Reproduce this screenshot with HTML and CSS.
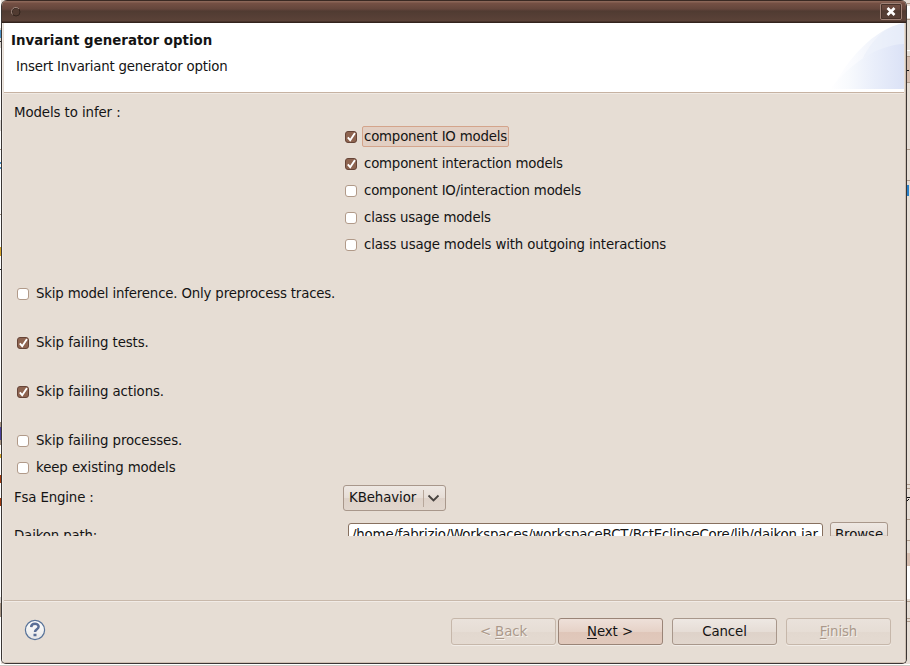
FILE: index.html
```
<!DOCTYPE html>
<html lang="en">
<head>
<meta charset="utf-8">
<title>Invariant generator option</title>
<link rel="stylesheet" href="styles.css">
</head>
<body>
<svg class="behind" width="910" height="666" shape-rendering="crispEdges">
  <rect width="910" height="666" fill="#e6ddd5"/>
  <rect width="1" height="666" fill="#fff"/>
  <path fill="#dcd7d3" d="M0 28h1v20H0zM0 120h1v11H0zM0 597h1v14H0z"/>
  <path fill="#4b91c5" d="M0 30h1v8H0zM0 162h1v2H0zM0 167h1v2H0z"/>
  <path fill="#222" d="M0 41h1v1H0zM0 269h1v1H0z"/>
  <path fill="#a69484" d="M0 149h1v1H0zM0 214h1v1H0zM0 422h1v23H0zM0 603h1v14H0z"/>
  <path fill="#d5a326" d="M0 247h1v9H0zM0 454h1v4H0z"/>
  <path fill="#4b419b" d="M0 427h1v13H0z"/>
  <path fill="#a13a0e" d="M0 475h1v8H0zM0 498h1v8H0z"/>
  <path fill="#fff" d="M907 6h3v12h-3zM907 50h3v1h-3zM907 566h3v33h-3z"/>
  <path fill="#d7beb0" d="M907 57h3v25h-3zM907 553h3v13h-3z"/>
  <path fill="#b09b8b" d="M907 3h3v1h-3zM907 19h3v1h-3zM907 56h3v1h-3zM907 82h3v1h-3zM907 149h3v1h-3zM907 180h3v1h-3zM907 484h3v1h-3zM907 488h3v1h-3zM907 519h3v1h-3zM907 540h3v1h-3zM907 601h3v1h-3zM907 618h3v1h-3zM907 621h3v1h-3z"/>
  <path fill="#111" d="M907 70h2v1h-2zM907 497h3v1h-3zM907 500h1v1h-1zM908 499h1v1h-1z"/>
  <path fill="#2880c8" d="M907 185h2v11h-2z"/>
  <path fill="#fff" d="M0 664h910v1H0z"/>
  <path fill="#cfc8c2" d="M0 665h910v1H0z"/>
</svg>
<main class="window">
  <div class="titlebar">
    <svg width="12" height="12"><circle cx="6" cy="6" r="4" fill="#513b31" stroke="#33251e"/><path d="M2.500 8.500A4.200 4.200 0 1 1 9 3" fill="none" stroke="#a38b80"/></svg>
    <span class="close"><svg width="10" height="9"><path d="M1.500 1l7 7M8.500 1l-7 7" stroke="#fff" stroke-width="2.600"/></svg></span>
  </div>
  <div class="content">
    <header class="header">
      <div class="titles"><h1>Invariant generator option</h1><p>Insert Invariant generator option</p></div>
      <svg class="swoosh" width="74" height="66">
        <defs><linearGradient id="a"><stop offset="0" stop-color="#fff"/><stop offset=".3" stop-color="#fafbfe"/><stop offset="1" stop-color="#e4eaf8"/></linearGradient><linearGradient id="b"><stop offset="0" stop-color="#fff"/><stop offset=".25" stop-color="#f8fafd"/><stop offset=".6" stop-color="#e9eefa"/><stop offset="1" stop-color="#dbe2f6"/></linearGradient></defs>
        <path d="M2 66C17 37 43 6 74 0V66z" fill="url(#a)"/><path d="M33 35C44 14 57 4 74 0V21C58 23 45 29 33 35z" fill="#e8eef9" opacity=".5"/>
        <path d="M0 66C22 39 48 22 74 21V66z" fill="url(#b)"/>
      </svg>
    </header>
    <section class="form">
      <div class="label models">Models to infer :</div>
      <div class="options">
        <label><i class="box on"></i><span class="focus">component IO models</span></label>
        <label><i class="box on"></i><span>component interaction models</span></label>
        <label><i class="box"></i><span>component IO/interaction models</span></label>
        <label><i class="box"></i><span>class usage models</span></label>
        <label><i class="box"></i><span class="long">class usage models with outgoing interactions</span></label>
      </div>
      <div class="skips">
        <label><i class="box"></i><span>Skip model inference. Only preprocess traces.</span></label>
        <label><i class="box on"></i><span>Skip failing tests.</span></label>
        <label><i class="box on"></i><span>Skip failing actions.</span></label>
        <label><i class="box"></i><span>Skip failing processes.</span></label>
      </div>
      <label class="keep"><i class="box"></i><span>keep existing models</span></label>
      <div class="engine"><span class="label">Fsa Engine :</span>
        <span class="combo"><span>KBehavior</span><svg width="24" height="23"><path d="M2.500 3v17" stroke="#b7a79b"/><path d="M7.500 8.500l5 5 5-5" fill="none" stroke="#474340" stroke-width="1.800"/></svg></span>
      </div>
      <div class="daikon"><span class="label">Daikon path:</span><span class="field">/home/fabrizio/Workspaces/workspaceBCT/BctEclipseCore/lib/daikon.jar</span><span class="browse">Browse</span></div>
    </section>
    <footer class="footer">
      <svg class="help" width="22" height="22"><defs><linearGradient id="h" x2="0" y2="1"><stop stop-color="#fff"/><stop offset="1" stop-color="#e6e6e6"/></linearGradient></defs><circle cx="11" cy="11" r="9.600" fill="url(#h)" stroke="#587399" stroke-width="1.200"/><path d="M7.200 8.100C7.300 3.700 14.800 3.800 14.600 7.800C14.500 10.300 11 10.200 11 13" fill="none" stroke="#596e96" stroke-width="2.500"/><path d="M9.500 14.700h3v2.500h-3z" fill="#596e96"/></svg>
      <div class="buttons">
        <span class="btn disabled">&lt; <u>B</u>ack</span><span class="btn default"><u>N</u>ext &gt;</span><span class="btn cancel">Cancel</span><span class="btn disabled finish"><u>F</u>inish</span>
      </div>
    </footer>
  </div>
</main>
</body>
</html>
```
FILE: styles.css
```
* { box-sizing: border-box; }
body { margin: 0; width: 910px; height: 666px; overflow: hidden; position: relative; font: 13.333px/21px "DejaVu Sans", sans-serif; letter-spacing: -.09px; color: #141414; white-space: nowrap; }
.behind { position: absolute; left: 0; top: 0; }
.window { position: relative; margin-left: 1px; width: 906px; height: 664px; border: 1px solid #3b3634; border-top: 0; border-radius: 6px 6px 5px 5px; background: #e6ddd4; overflow: hidden; }
.titlebar { height: 23px; margin: 0 -1px; padding: 0 5px 0 9px; display: flex; justify-content: space-between; align-items: center; background: linear-gradient(#3a2923 0 1px, #8b6658 1px 2px, #755044 3px, #65463c 9px, #503b32 11px, #5b4238 21px, #33231d 22px); }
.close { width: 22px; height: 17px; border: 1px solid #9e8277; outline: 1px solid #46322a; outline-offset: -2px; border-radius: 2px; display: flex; align-items: center; justify-content: center; }
.content { border-left: 1px solid #f0ebe6; border-right: 1px solid #cdbfb2; border-bottom: 1px solid #cfc0b2; height: 640px; display: flex; flex-direction: column; }
.header { height: 70px; margin: 0 1px; background: #fff; border-bottom: 1px solid #c6b2a2; box-shadow: 0 1px #f0eae4; display: flex; justify-content: space-between; flex: none; }
h1 { margin: 7px 0 5px 7px; font-size: 13.333px; line-height: 21px; letter-spacing: .03px; }
p { margin: 0 0 0 12px; line-height: 21px; letter-spacing: -.21px; }
.form { height: 443px; overflow: hidden; padding: 9px 0 0 11px; flex: none; }
.label { display: block; }
.models { height: 24px; }
.options { display: flex; flex-direction: column; gap: 6px; margin-left: 331px; letter-spacing: -.2px; }
.long { letter-spacing: -.16px; }
label { display: flex; height: 21px; align-items: center; }
label span { line-height: 19px; border: 1px solid transparent; padding: 0 1px; margin-left: 5px; }
label .focus { background: #e2cfc3; border-color: #d4a48b; border-radius: 2px; }
.box { width: 12px; height: 12px; margin-top: 1px; border: 1px solid #b19a89; border-radius: 3px; background: #fff; flex: none; }
.on { border-color: #664437; background: #8e6450 url("data:image/svg+xml,%3Csvg xmlns='http://www.w3.org/2000/svg' width='10' height='10'%3E%3Cpath d='M1.800 5.300L4.200 8.200L9 1' fill='none' stroke='white' stroke-width='1.900'/%3E%3C/svg%3E"); }
.skips { margin: 28px 0 0 3px; display: flex; flex-direction: column; gap: 28px; }
.skips label:first-child { letter-spacing: -.17px; }
.keep { margin: 6px 0 0 3px; }
.engine { display: flex; align-items: center; margin-top: 7px; height: 26px; }
.engine .label { width: 329px; margin-top: -2px; letter-spacing: -.15px; }
.combo, .browse, .btn { border: 1px solid #a8978b; border-radius: 3px; background: linear-gradient(#eee8e3, #e6ddd6 50%, #ded2c9 51%, #e1d6cd); }
.combo { height: 26px; width: 103px; padding-left: 5px; display: flex; justify-content: space-between; align-items: center; }
.combo span { margin-top: -2px; }
.daikon { margin-top: 11px; height: 26px; display: flex; align-items: flex-start; }
.daikon .label { width: 334px; padding-top: 3px; letter-spacing: -.15px; }
.field { width: 475px; height: 26px; margin-top: 1px; padding: 0 3px; line-height: 22px; letter-spacing: -.165px; border: 1px solid #87705f; border-radius: 3px; background: #fff; overflow: hidden; }
.browse { width: 58px; height: 26px; margin-left: 7px; padding-left: 4px; line-height: 24px; }
.footer { flex: 1; margin: 64px 1px 0; border-top: 1px solid #c8b8aa; box-shadow: inset 0 1px #f1ebe6; display: flex; justify-content: space-between; padding: 17px 13px 0 20px; }
.help { margin-top: 1px; }
.buttons { display: flex; height: 27px; }
.btn { width: 105px; height: 27px; line-height: 25px; text-align: center; box-shadow: 0 1px #f1ece7; }
.btn u { text-underline-offset: 2px; text-decoration-thickness: 1px; }
.disabled { color: #ab998b; border-color: #c6b7aa; background: linear-gradient(#eae2db, #e6ddd5 50%, #e2d8cf 51%, #e4dad1); text-shadow: 1px 1px #f5f1ed; }
.default { margin-left: 2px; padding-right: 1px; border-color: #9a8477; background: linear-gradient(#eee0d9, #e6d2c7 50%, #dfc6b9 51%, #e1c9bc); }
.cancel { margin-left: 9px; }
.finish { margin-left: 9px; }
```
